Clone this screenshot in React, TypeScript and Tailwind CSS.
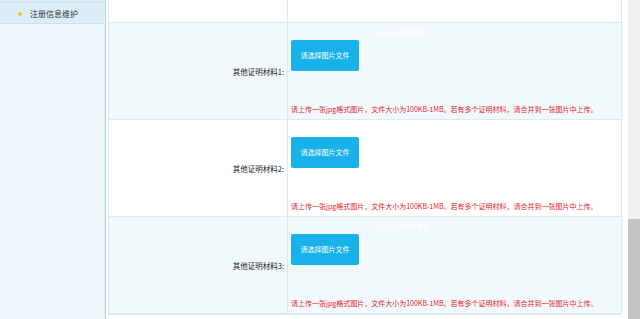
export default function App() {
  const rows = [
    { label: "其他证明材料1:", shade: true, ghost: true },
    { label: "其他证明材料2:", shade: false, ghost: false },
    { label: "其他证明材料3:", shade: true, ghost: true },
  ];
  const font = { fontFamily: '"Microsoft YaHei", "Noto Sans CJK SC", "Liberation Sans", sans-serif' };

  return (
    <div className="flex h-[319px] w-[640px] overflow-hidden bg-white" style={font}>
      {/* sidebar */}
      <div className="flex w-[104px] shrink-0 flex-col bg-[#eff7fc]">
        <div className="h-[3px] border-b border-[#c9e1f0] bg-[#dcedf8]"></div>
        <div className="flex h-[21px] items-center border-b border-[#c9e1f0] bg-[#dcedf8] pl-[18px] pt-[2px] text-[8px] text-[#333]">
          <span className="mr-[8px] h-[4px] w-[4px] rounded-full bg-[#f2c02e]"></span>
          注册信息维护
        </div>
      </div>
      <div className="w-[1px] shrink-0 bg-[#e4f0f7]"></div>
      <div className="w-[1px] shrink-0 bg-[#a9d2e2]"></div>

      {/* main */}
      <div className="flex-1 pl-[2px]">
        <div className="w-[514px] border-x border-b border-[#dde9f1]">
          <div className="flex h-[23px] border-b border-[#dde9f1]">
            <div className="w-[179px] border-r border-[#dde9f1]"></div>
            <div className="flex-1"></div>
          </div>
          {rows.map((r, i) => (
            <div
              key={i}
              className={`flex h-[97px] border-b border-[#dde9f1] ${r.shade ? "bg-[#f2f9fd]" : "bg-white"}`}
            >
              <div className="flex w-[179px] items-center justify-end border-r border-[#dde9f1] pr-[3px] pt-[2px] text-[7.5px] text-[#222]">
                {r.label}
              </div>
              <div className="relative flex-1 pl-[3px] pt-[17px]">
                {r.ghost && (
                  <span className="absolute left-[87px] top-[5px] text-[6px] text-white">请上传证明材料图片</span>
                )}
                <button className="flex h-[31px] w-[68px] items-center justify-center rounded-[2px] bg-[#19b1e9] text-[7px] text-white">
                  请选择图片文件
                </button>
                <div className="mt-[33px] text-[7px] text-[#e8232e]">
                  请上传一张jpg格式图片，文件大小为100KB-1MB。若有多个证明材料，请合并到一张图片中上传。
                </div>
              </div>
            </div>
          ))}
        </div>
      </div>

      {/* scrollbar */}
      <div className="flex w-[12px] shrink-0 flex-col bg-[#f0f0f0]">
        <div className="h-[219px]"></div>
        <div className="flex-1 bg-[#c4c4c4]"></div>
      </div>
    </div>
  );
}
